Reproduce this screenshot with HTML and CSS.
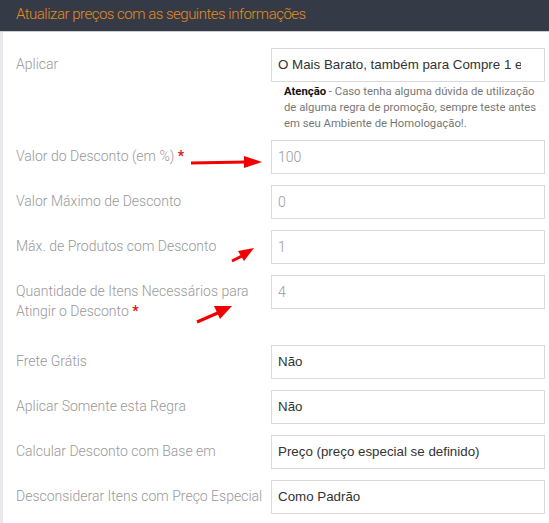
FILE: index.html
```html
<!DOCTYPE html>
<html lang="pt-BR">
<head>
<meta charset="utf-8">
<title>Atualizar preços</title>
<link rel="stylesheet" href="styles.css">
</head>
<body>
<div class="page">
  <div class="panel-head">Atualizar preços com as seguintes informações</div>
  <div class="panel-body">
    <div class="row row-help">
      <div class="label">Aplicar</div>
      <div class="control">
        <div class="field field-dark field-select"><span class="field-text">O Mais Barato, também para Compre 1 e Leve 2</span></div>
        <div class="help"><b>Atenção</b> - Caso tenha alguma dúvida de utilização de alguma regra de promoção, sempre teste antes em seu Ambiente de Homologação!.</div>
      </div>
    </div>
    <div class="row">
      <div class="label">Valor do Desconto (em %) <span class="req">*</span></div>
      <div class="control"><div class="field field-light">100</div></div>
    </div>
    <div class="row">
      <div class="label">Valor Máximo de Desconto</div>
      <div class="control"><div class="field field-light">0</div></div>
    </div>
    <div class="row">
      <div class="label">Máx. de Produtos com Desconto</div>
      <div class="control"><div class="field field-light">1</div></div>
    </div>
    <div class="row row-tall">
      <div class="label">Quantidade de Itens Necessários para Atingir o Desconto <span class="req">*</span></div>
      <div class="control"><div class="field field-light">4</div></div>
    </div>
    <div class="row">
      <div class="label">Frete Grátis</div>
      <div class="control"><div class="field field-dark">Não</div></div>
    </div>
    <div class="row">
      <div class="label">Aplicar Somente esta Regra</div>
      <div class="control"><div class="field field-dark">Não</div></div>
    </div>
    <div class="row">
      <div class="label">Calcular Desconto com Base em</div>
      <div class="control"><div class="field field-dark">Preço (preço especial se definido)</div></div>
    </div>
    <div class="row">
      <div class="label">Desconsiderar Itens com Preço Especial</div>
      <div class="control"><div class="field field-dark">Como Padrão</div></div>
    </div>
  </div>
  <svg class="arrows" width="549" height="523" viewBox="0 0 549 523" aria-hidden="true">
    <g fill="#f20000" stroke="#f20000">
      <line x1="191" y1="163" x2="246" y2="162" stroke-width="3"/>
      <polygon points="244,156 262,162 244,168" stroke="none"/>
      <line x1="232" y1="261" x2="244" y2="255" stroke-width="3"/>
      <polygon points="238,251 254,248 244,261" stroke="none"/>
      <line x1="197" y1="322" x2="220" y2="312" stroke-width="3"/>
      <polygon points="214,306 232,306 220,319" stroke="none"/>
    </g>
  </svg>
</div>
</body>
</html>
```

FILE: styles.css
```css
html, body {
  margin: 0;
  padding: 0;
  background: #ffffff;
}

body {
  font-family: Roboto, "Liberation Sans", Arial, sans-serif;
}

.page {
  position: relative;
  width: 549px;
  height: 523px;
  overflow: hidden;
}

.panel-head {
  height: 31px;
  line-height: 29px;
  padding-left: 16px;
  background: #343a46;
  color: #e48c1e;
  font-size: 15px;
  font-weight: 300;
  letter-spacing: -0.5px;
  border-bottom: 1px solid #c9ccd1;
}

.panel-body {
  border-left: 3px solid #e9eaed;
  padding: 16px 4px 0 13px;
  min-height: 500px;
}

.row {
  display: flex;
  margin-bottom: 11px;
}

.row-help {
  margin-bottom: 8px;
}

.row-tall {
  margin-bottom: 24px;
}

.label {
  width: 255px;
  flex: none;
  box-sizing: border-box;
  padding: 6px 8px 0 0;
  font-size: 14px;
  line-height: 20px;
  font-weight: 300;
  color: #999999;
}

.req {
  color: #d9141b;
  font-weight: 700;
}

.control {
  width: 274px;
  flex: none;
}

.field {
  height: 34px;
  box-sizing: border-box;
  border: 1px solid #d9d9dc;
  padding: 0 6px;
  line-height: 32px;
  font-size: 14px;
  white-space: nowrap;
  overflow: hidden;
}

.field-select {
  padding-right: 23px;
}

.field-text {
  display: block;
  overflow: hidden;
}

.field-dark {
  font-family: "Liberation Sans", Arial, sans-serif;
  font-size: 13.33px;
  color: #333333;
}

.field-light {
  font-family: Roboto, sans-serif;
  font-weight: 300;
  color: #999999;
}

.help {
  margin-top: 2px;
  padding: 0 0 0 13px;
  font-size: 11.3px;
  line-height: 16px;
  color: #777777;
}

.help b {
  color: #111111;
  font-weight: 700;
}

.arrows {
  position: absolute;
  left: 0;
  top: 0;
  pointer-events: none;
}
```
